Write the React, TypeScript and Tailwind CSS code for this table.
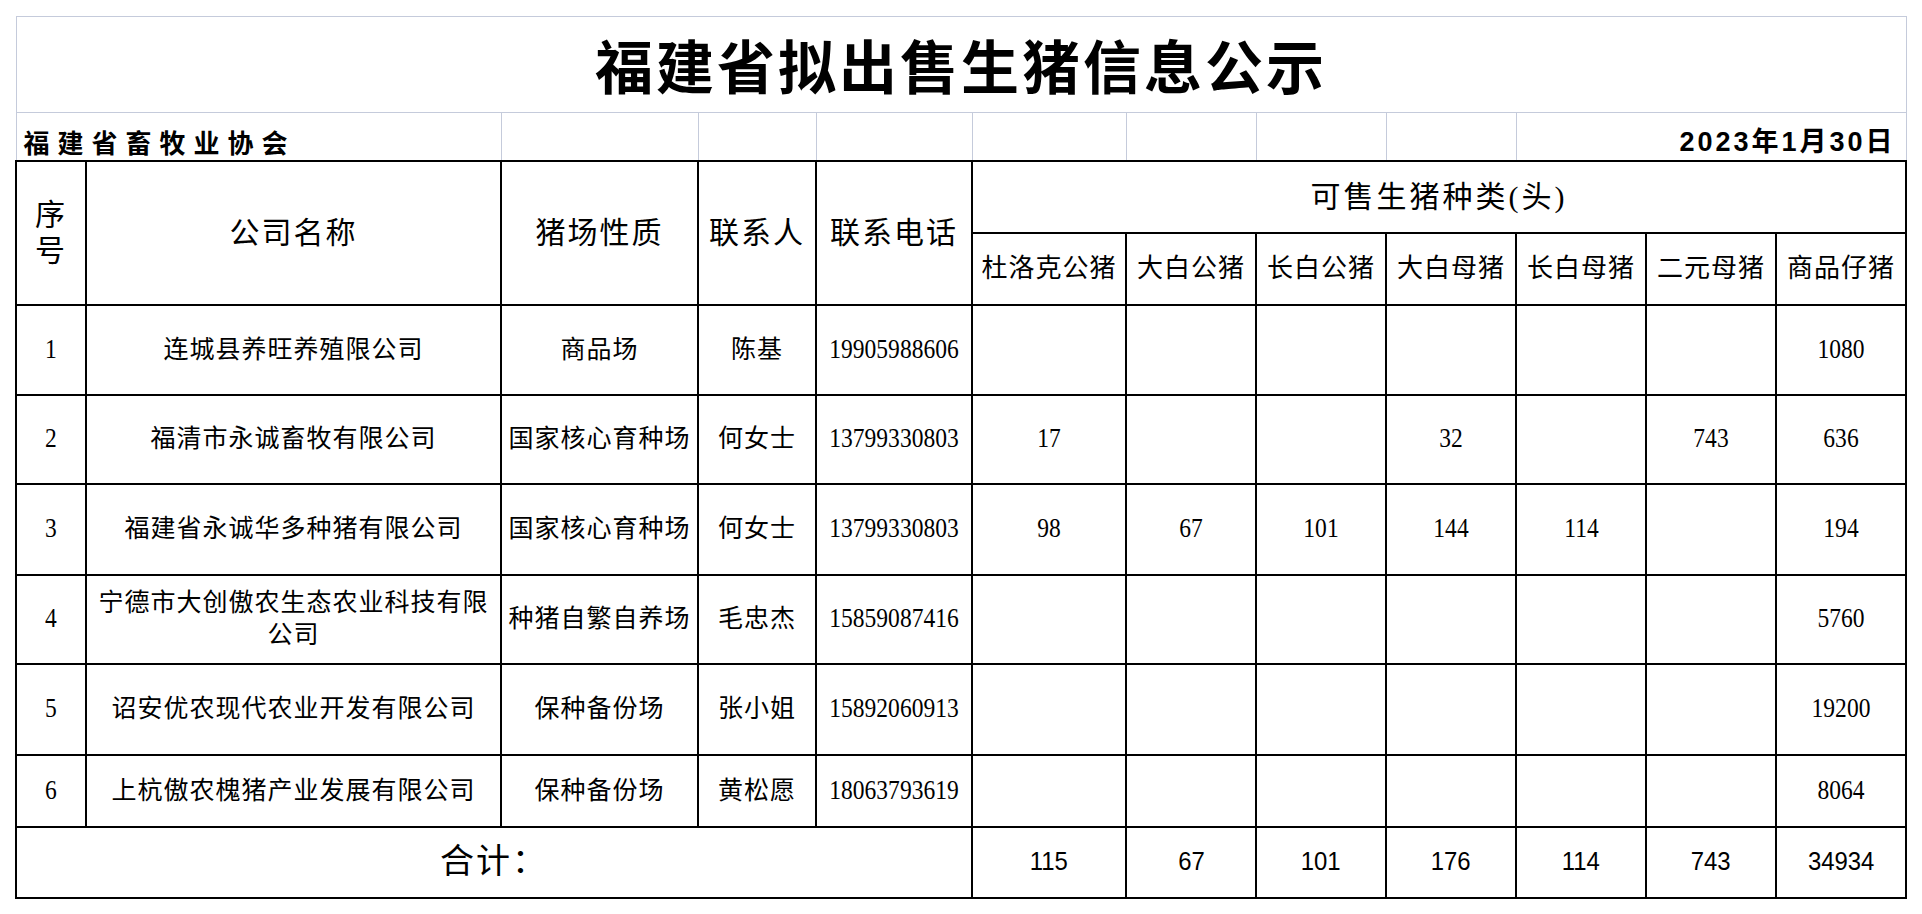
import React from "react"

type Farm = {
  no: number
  name: string
  kind: string
  contact: string
  phone: string
  counts: string[]
  h: string
}

const farms: Farm[] = [
  { no: 1, name: "连城县养旺养殖限公司", kind: "商品场", contact: "陈基", phone: "19905988606", counts: ["", "", "", "", "", "", "1080"], h: "h-[90px]" },
  { no: 2, name: "福清市永诚畜牧有限公司", kind: "国家核心育种场", contact: "何女士", phone: "13799330803", counts: ["17", "", "", "32", "", "743", "636"], h: "h-[89px]" },
  { no: 3, name: "福建省永诚华多种猪有限公司", kind: "国家核心育种场", contact: "何女士", phone: "13799330803", counts: ["98", "67", "101", "144", "114", "", "194"], h: "h-[91px]" },
  { no: 4, name: "宁德市大创傲农生态农业科技有限公司", kind: "种猪自繁自养场", contact: "毛忠杰", phone: "15859087416", counts: ["", "", "", "", "", "", "5760"], h: "h-[89px]" },
  { no: 5, name: "诏安优农现代农业开发有限公司", kind: "保种备份场", contact: "张小姐", phone: "15892060913", counts: ["", "", "", "", "", "", "19200"], h: "h-[91px]" },
  { no: 6, name: "上杭傲农槐猪产业发展有限公司", kind: "保种备份场", contact: "黄松愿", phone: "18063793619", counts: ["", "", "", "", "", "", "8064"], h: "h-[72px]" },
]

const breeds = ["杜洛克公猪", "大白公猪", "长白公猪", "大白母猪", "长白母猪", "二元母猪", "商品仔猪"]
const totals = ["115", "67", "101", "176", "114", "743", "34934"]

const grid = "border border-[#c5cbdb]"
const cell = "border-2 border-black text-center align-middle p-0"
const head = "text-[30px] tracking-[2px] leading-[36px]"
const body = "text-[25px] tracking-[1px] leading-[32px]"

// numbers in the sheet are a squeezed Times
function Num({ v }: { v: string | number }) {
  return <span className="inline-block scale-x-[0.84] text-[28px] leading-none tracking-normal">{v}</span>
}

export default function App() {
  return (
    <div className="min-h-screen bg-white pl-[15px] pt-[16px] text-black font-['Liberation_Serif','Noto_Sans_CJK_SC',serif]">
      <table className="w-[1891px] table-fixed border-collapse">
        <colgroup>
          <col className="w-[70px]" />
          <col className="w-[415px]" />
          <col className="w-[197px]" />
          <col className="w-[118px]" />
          <col className="w-[156px]" />
          <col className="w-[154px]" />
          <col className="w-[130px]" />
          <col className="w-[130px]" />
          <col className="w-[130px]" />
          <col className="w-[130px]" />
          <col className="w-[130px]" />
          <col className="w-[130px]" />
        </colgroup>
        <tbody>
          <tr className="h-[96px]">
            <td colSpan={12} className={`${grid} text-center font-['Noto_Sans_CJK_SC',sans-serif] text-[58px] font-bold tracking-[3px]`}>
              福建省拟出售生猪信息公示
            </td>
          </tr>
          <tr className="h-[48px]">
            <td colSpan={2} className={`${grid} pb-[2px] pl-[7px] align-bottom font-['Noto_Sans_CJK_SC',sans-serif] text-[26px] font-bold leading-[32px] tracking-[8px]`}>
              福建省畜牧业协会
            </td>
            <td className={grid} />
            <td className={grid} />
            <td className={grid} />
            <td className={grid} />
            <td className={grid} />
            <td className={grid} />
            <td className={grid} />
            <td colSpan={3} className={`${grid} pb-[2px] pr-[10px] text-right align-bottom font-['Liberation_Sans','Noto_Sans_CJK_SC',sans-serif] text-[27px] font-bold leading-[32px] tracking-[3px]`}>
              2023年1月30日
            </td>
          </tr>
          <tr className="h-[72px]">
            <td rowSpan={2} className={`${cell} ${head}`}>
              序<br />号
            </td>
            <td rowSpan={2} className={`${cell} ${head}`}>公司名称</td>
            <td rowSpan={2} className={`${cell} ${head}`}>猪场性质</td>
            <td rowSpan={2} className={`${cell} ${head}`}>联系人</td>
            <td rowSpan={2} className={`${cell} ${head}`}>联系电话</td>
            <td colSpan={7} className={`${cell} text-[30px] tracking-[3px] leading-[36px]`}>可售生猪种类(头)</td>
          </tr>
          <tr className="h-[72px]">
            {breeds.map((b) => (
              <td key={b} className={`${cell} text-[26px] tracking-[1px] leading-[32px]`}>{b}</td>
            ))}
          </tr>
          {farms.map((f) => (
            <tr key={f.no} className={f.h}>
              <td className={cell}><Num v={f.no} /></td>
              <td className={`${cell} ${body} px-2`}>{f.name}</td>
              <td className={`${cell} ${body} px-1`}>{f.kind}</td>
              <td className={`${cell} ${body}`}>{f.contact}</td>
              <td className={cell}><Num v={f.phone} /></td>
              {f.counts.map((c, i) => (
                <td key={i} className={cell}>{c && <Num v={c} />}</td>
              ))}
            </tr>
          ))}
          <tr className="h-[71px]">
            <td colSpan={5} className={`${cell} text-[34px] tracking-[2px] leading-[38px]`}>合计：</td>
            {totals.map((t, i) => (
              <td key={i} className={`${cell} font-['Liberation_Sans',sans-serif]`}>
                <span className="inline-block scale-x-[0.92] text-[26px] leading-none">{t}</span>
              </td>
            ))}
          </tr>
        </tbody>
      </table>
    </div>
  )
}
